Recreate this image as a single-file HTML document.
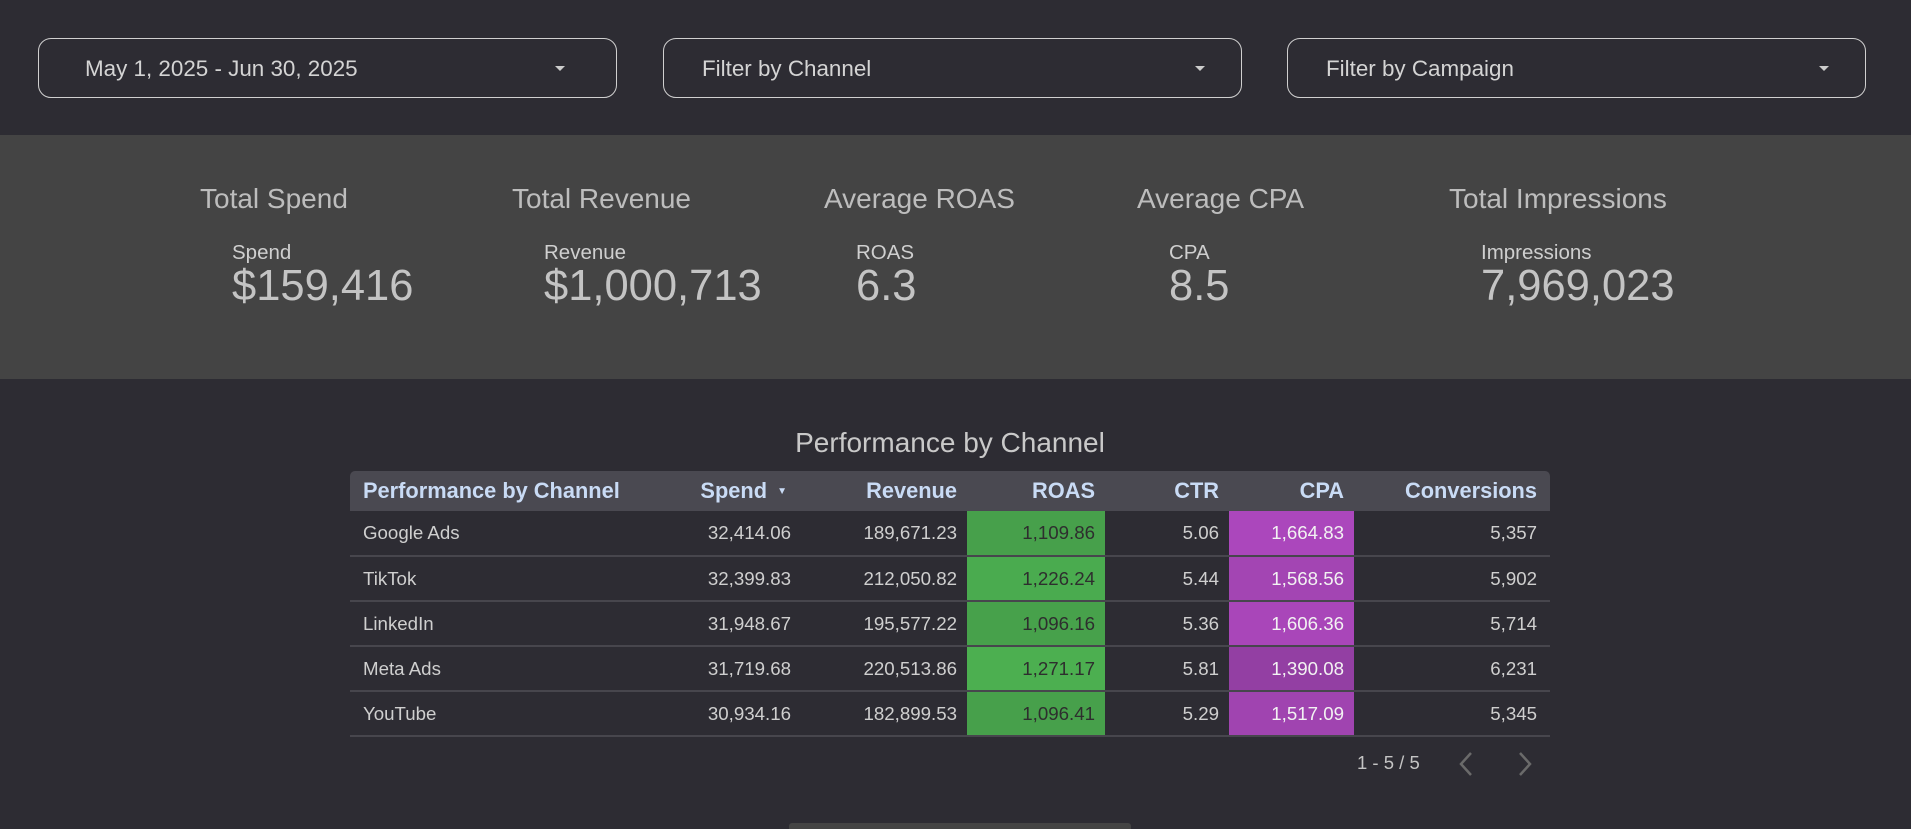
<!DOCTYPE html>
<html><head><meta charset="utf-8"><style>
*{box-sizing:border-box;margin:0;padding:0}
body{width:1911px;height:829px;background:#2d2c33;font-family:"Liberation Sans",sans-serif;position:relative;overflow:hidden;color:#c8c8c8}
.dd{position:absolute;top:38px;height:60px;border:1.5px solid #d0d0d0;border-radius:13px;font-size:22.4px;color:#d4d4d4;line-height:59px;padding-left:38px}
.dd .ar{position:absolute;top:27px;width:0;height:0;border-left:5px solid transparent;border-right:5px solid transparent;border-top:5px solid #ccc}
.band{position:absolute;top:135px;left:0;width:1911px;height:244px;background:#444444}
.kpi{position:absolute;top:183px}
.kpi .t{font-size:28px;color:#bdbdbd;white-space:nowrap}
.kpi .s{font-size:20.5px;color:#cfcfcf;margin:26px 0 0 32px;white-space:nowrap}
.kpi .v{font-size:43.5px;color:#c4c4c4;margin:-3px 0 0 32px;white-space:nowrap}
.title{position:absolute;top:427px;left:350px;width:1200px;text-align:center;font-size:28px;color:#c9c9c9}
table{position:absolute;top:471px;left:350px;width:1200px;border-collapse:collapse;font-size:18.7px}
th{background:#4a4951;height:40px;color:#c9dbf5;font-size:21.8px;font-weight:bold;text-align:right;padding:0 10px}
th:first-child{border-top-left-radius:5px;text-align:left;padding-left:13px}
th:last-child{border-top-right-radius:5px;padding-right:13px}
td{height:45px;border-bottom:2px solid #47464d;text-align:right;padding:0 10px;color:#cfcfcf}
td:first-child{text-align:left;padding-left:13px}
td:last-child{padding-right:13px}
td.g{color:#2e2e2e}
td.p{color:#f2f2f2}
</style></head><body>
<div class="dd" style="left:38px;width:579px;padding-left:46px">May 1, 2025 - Jun 30, 2025<span class="ar" style="left:516px"></span></div>
<div class="dd" style="left:663px;width:579px">Filter by Channel<span class="ar" style="left:531px"></span></div>
<div class="dd" style="left:1287px;width:579px">Filter by Campaign<span class="ar" style="left:531px"></span></div>
<div class="band"></div>
<div class="kpi" style="left:200px"><div class="t">Total Spend</div><div class="s">Spend</div><div class="v">$159,416</div></div>
<div class="kpi" style="left:512px"><div class="t">Total Revenue</div><div class="s">Revenue</div><div class="v">$1,000,713</div></div>
<div class="kpi" style="left:824px"><div class="t">Average ROAS</div><div class="s">ROAS</div><div class="v">6.3</div></div>
<div class="kpi" style="left:1137px"><div class="t">Average CPA</div><div class="s">CPA</div><div class="v">8.5</div></div>
<div class="kpi" style="left:1449px"><div class="t">Total Impressions</div><div class="s">Impressions</div><div class="v">7,969,023</div></div>
<div class="title">Performance by Channel</div>
<table>
<colgroup><col style="width:300px"><col style="width:151px"><col style="width:166px"><col style="width:138px"><col style="width:124px"><col style="width:125px"><col style="width:196px"></colgroup>
<tr><th>Performance by Channel</th><th style="padding-right:14px">Spend <span style="font-size:10px;position:relative;top:-4px;margin-left:4px">&#9660;</span></th><th>Revenue</th><th>ROAS</th><th>CTR</th><th>CPA</th><th>Conversions</th></tr>
<tr><td>Google Ads</td><td>32,414.06</td><td>189,671.23</td><td class="g" style="background:#47a04b">1,109.86</td><td>5.06</td><td class="p" style="background:#ab47bc">1,664.83</td><td>5,357</td></tr>
<tr><td>TikTok</td><td>32,399.83</td><td>212,050.82</td><td class="g" style="background:#4aab4f">1,226.24</td><td>5.44</td><td class="p" style="background:#a345b3">1,568.56</td><td>5,902</td></tr>
<tr><td>LinkedIn</td><td>31,948.67</td><td>195,577.22</td><td class="g" style="background:#47a14b">1,096.16</td><td>5.36</td><td class="p" style="background:#a946b9">1,606.36</td><td>5,714</td></tr>
<tr><td>Meta Ads</td><td>31,719.68</td><td>220,513.86</td><td class="g" style="background:#4caf50">1,271.17</td><td>5.81</td><td class="p" style="background:#933fa3">1,390.08</td><td>6,231</td></tr>
<tr><td>YouTube</td><td>30,934.16</td><td>182,899.53</td><td class="g" style="background:#47a04b">1,096.41</td><td>5.29</td><td class="p" style="background:#a044b0">1,517.09</td><td>5,345</td></tr>
</table>
<div style="position:absolute;top:752px;left:1357px;font-size:18.5px;color:#c4c4c4">1 - 5 / 5</div>
<svg style="position:absolute;left:1456px;top:752px" width="80" height="24" viewBox="0 0 80 24"><path d="M15 1 L5 12 L15 23" fill="none" stroke="#6a6a6a" stroke-width="2.5"/><path d="M64 1 L74 12 L64 23" fill="none" stroke="#6a6a6a" stroke-width="2.5"/></svg>
<div style="position:absolute;top:823px;left:789px;width:342px;height:6px;background:#444;border-radius:3px 3px 0 0"></div>
</body></html>
